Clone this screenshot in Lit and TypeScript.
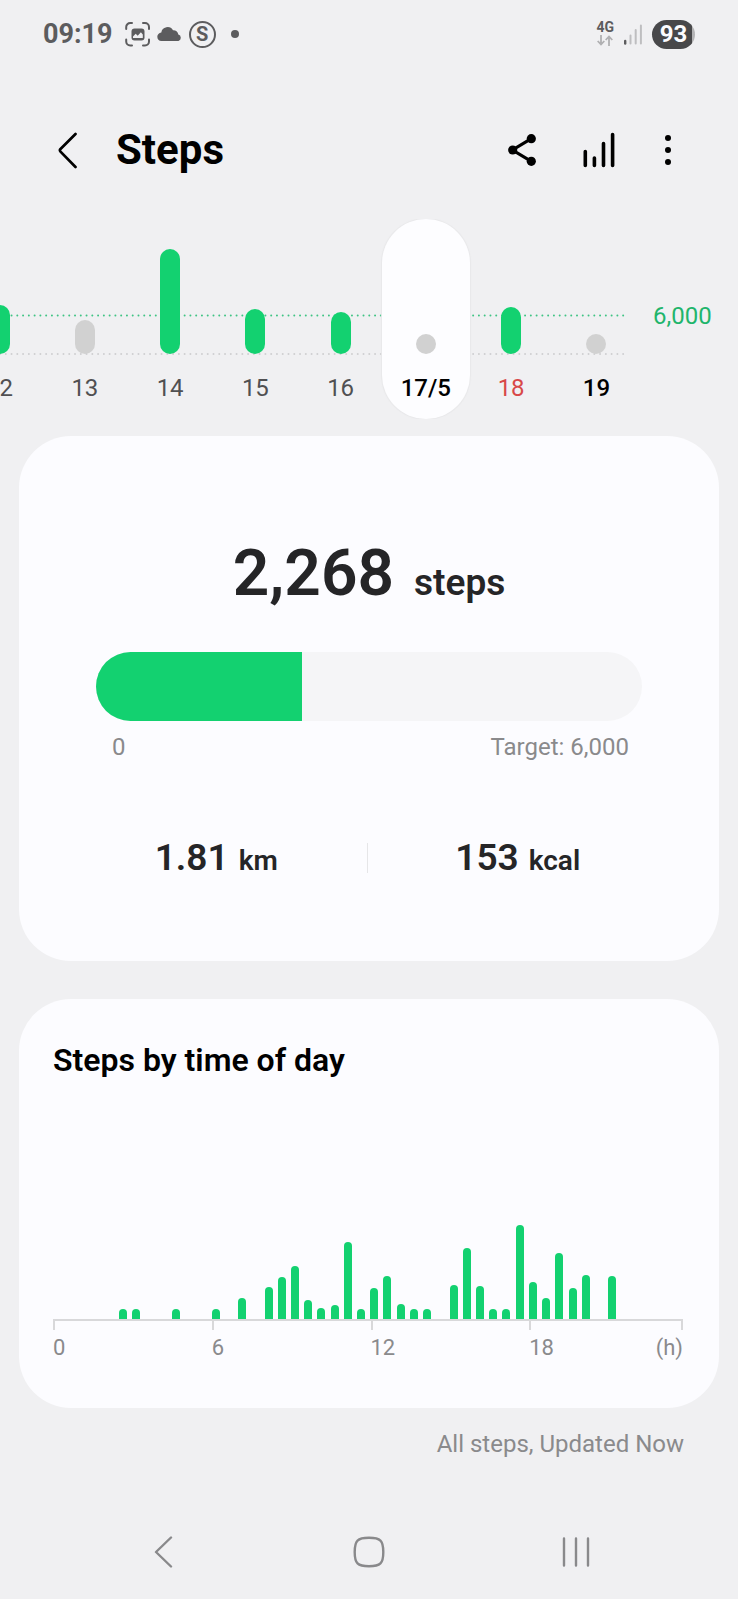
import { LitElement, html, css, svg } from "lit";
import { customElement, state } from "lit/decorators.js";
import { classMap } from "lit/directives/class-map.js";

interface Day {
  label: string;
  height: number;
  reached: boolean;
  tone?: "holiday" | "today";
}

const DAYS: Day[] = [
  { label: "12", height: 49, reached: true },
  { label: "13", height: 34, reached: false },
  { label: "14", height: 105, reached: true },
  { label: "15", height: 45, reached: true },
  { label: "16", height: 42, reached: true },
  { label: "17/5", height: 20, reached: false },
  { label: "18", height: 47, reached: true, tone: "holiday" },
  { label: "19", height: 20, reached: false, tone: "today" },
];

// One entry per half hour of the day.
const HALF_HOURS: number[] = [
  0, 0, 0, 0, 0, 10, 10, 0, 0, 10, 0, 0,
  10, 0, 21, 0, 32, 42, 53, 19, 11, 14, 77, 10,
  31, 43, 15, 10, 10, 0, 34, 71, 33, 10, 10, 94,
  37, 21, 66, 31, 44, 0, 43, 0, 0, 0, 0, 0,
];

@customElement("status-bar")
export class StatusBar extends LitElement {
  static styles = css`
    :host {
      display: flex;
      align-items: center;
      height: 68px;
      padding: 0 43px;
      color: #5c5c5e;
      font-weight: 700;
      box-sizing: border-box;
    }
    svg {
      display: block;
      flex: none;
    }
    .time {
      font-size: 27px;
      margin-right: 12px;
    }
    .notices {
      display: flex;
      align-items: center;
      gap: 7px;
    }
    .ring {
      width: 27px;
      height: 27px;
      border: 2px solid;
      border-radius: 50%;
      box-sizing: border-box;
      display: grid;
      place-items: center;
      font-size: 20px;
      line-height: 20px;
    }
    .dot {
      width: 8px;
      height: 8px;
      margin-left: 8px;
      border-radius: 50%;
      background: currentColor;
    }
    .system {
      display: flex;
      align-items: center;
      gap: 10px;
      margin-left: auto;
    }
    .network {
      display: grid;
      justify-items: center;
      gap: 2px;
      font-size: 14px;
      line-height: 11px;
    }
    .battery {
      width: 43px;
      height: 29px;
      border-radius: 15px;
      background: linear-gradient(to right, #48484a 93%, #b4b4b6 93%);
      color: #fcfcff;
      font-size: 24px;
      line-height: 29px;
      text-align: center;
    }
  `;

  render() {
    return html`
      <span class="time">09:19</span>
      <div class="notices">
        <svg width="25" height="25" viewBox="0 0 25 25" aria-hidden="true">
          <path
            d="M1.2 7V5a4 4 0 0 1 4-4H7M18 1h2a4 4 0 0 1 4 4v2M24 17.5v2a4 4 0 0 1-4 4h-2M7 23.5H5.2a4 4 0 0 1-4-4v-2"
            fill="none" stroke="currentColor" stroke-width="2" stroke-linecap="round"
          />
          <rect x="6.5" y="6.5" width="13" height="12" rx="3" fill="currentColor" />
          <path d="M8 16v-1.5l2.7-2.7 2 2 3.2-3.6 1.9 2.3V16z" fill="#f0f0f2" />
        </svg>
        <svg width="25" height="14" viewBox="0 0 25 14" aria-hidden="true">
          <path
            d="M4.5 14A4.3 4.3 0 0 1 .3 9.8c0-2.200 1.700-4 4-4.300A6.300 6.300 0 0 1 16 3.200a4.800 4.800 0 0 1 5.300 4.300A3.400 3.400 0 0 1 21.500 14z"
            fill="currentColor"
          />
        </svg>
        <span class="ring">S</span>
        <span class="dot"></span>
      </div>
      <div class="system">
        <div class="network">
          <span>4G</span>
          <svg width="16" height="11" viewBox="0 0 16 11" fill="none" stroke="#b0b0b2" stroke-width="1.8" aria-hidden="true">
            <path d="M4 0v9.500M.7 6 4 9.500 7.300 6M12 11V1.500M8.700 5 12 1.500 15.300 5" />
          </svg>
        </div>
        <svg width="18" height="21" viewBox="0 0 18 21" stroke="#bebec0" stroke-width="2" stroke-linecap="round" aria-hidden="true">
          <path d="M1.200 17v2.500" stroke="#5c5c5e" stroke-width="2.400" />
          <path d="M6.500 11.500v8M11.700 6v13.500M16.900 1.500v18" />
        </svg>
        <span class="battery">93</span>
      </div>
    `;
  }
}

@customElement("day-strip")
export class DayStrip extends LitElement {
  static styles = css`
    :host {
      display: flex;
      position: relative;
      overflow: hidden;
      height: 200px;
    }
    .guides {
      position: absolute;
      inset: 0 113px 0 0;
      width: calc(100% - 113px);
      height: 100%;
    }
    .days {
      position: relative;
      flex: 1;
      display: grid;
      grid-template-columns: repeat(8, 1fr);
      justify-items: center;
      margin-left: -43px;
    }
    .day {
      display: flex;
      flex-direction: column;
      align-items: center;
      justify-content: flex-end;
      gap: 20px;
      width: 88px;
      margin: 0 -2px;
      padding: 0 0 17px;
      border: 0;
      border-radius: 44px;
      background: none;
      color: #505052;
      font: inherit;
      font-size: 24px;
      line-height: 28px;
      cursor: pointer;
    }
    .day.holiday {
      color: #d84848;
    }
    .day.today,
    .day.selected {
      color: #000;
      font-weight: 500;
    }
    .day.selected {
      background: #fdfdff;
      box-shadow: 0 0 1px 1px #e8e8ea;
    }
    .bar {
      width: 20px;
      border-radius: 10px;
      background: #d1d1d1;
    }
    .bar.reached {
      background: #13d170;
    }
    .target {
      width: 99px;
      padding: 83px 0 0 14px;
      box-sizing: border-box;
      color: #1fb56c;
      font-size: 24px;
      line-height: 28px;
    }
  `;

  @state() private selected = 5;

  render() {
    return html`
      <svg class="guides" fill="none" stroke-width="2" stroke-linecap="round" stroke-dasharray="0 5.77" aria-hidden="true">
        ${svg`
          <line x1="0" y1="96.5" x2="100%" y2="96.5" stroke="#3fc484" />
          <line x1="0" y1="135" x2="100%" y2="135" stroke="#cfcfd1" />
        `}
      </svg>
      <div class="days">
        ${DAYS.map(
          (day, i) => html`
            <button
              class=${classMap({
                day: true,
                holiday: day.tone === "holiday",
                today: day.tone === "today",
                selected: i === this.selected,
              })}
              @click=${() => (this.selected = i)}
            >
              <span class=${classMap({ bar: true, reached: day.reached })} style="height:${day.height}px"></span>
              <span>${day.label}</span>
            </button>
          `,
        )}
      </div>
      <span class="target">6,000</span>
    `;
  }
}

@customElement("steps-summary")
export class StepsSummary extends LitElement {
  static styles = css`
    :host {
      display: block;
      padding: 98px 77px 81px;
      color: #252527;
      font-weight: 600;
    }
    .total {
      display: flex;
      justify-content: center;
      align-items: baseline;
      gap: 20px;
      font-size: 64px;
      line-height: 80px;
    }
    .total-unit {
      font-size: 37px;
      line-height: 44px;
    }
    .track {
      height: 69px;
      margin-top: 38px;
      border-radius: 35px;
      overflow: hidden;
      background: #f5f5f7;
    }
    .fill {
      height: 100%;
      background: #13d170;
    }
    .range {
      display: flex;
      justify-content: space-between;
      padding: 12px 13px 0 16px;
      color: #8a8a8c;
      font-size: 24px;
      font-weight: 400;
      line-height: 28px;
    }
    .stats {
      display: grid;
      grid-template-columns: 1fr 1px 1fr;
      align-items: center;
      margin: 75px -26px 0 -30px;
      line-height: 44px;
    }
    .stat {
      display: flex;
      justify-content: center;
      align-items: baseline;
      gap: 10px;
    }
    .value {
      font-size: 37px;
    }
    .unit {
      font-size: 28px;
      line-height: 32px;
    }
    .rule {
      height: 30px;
      background: #e6e6e8;
    }
  `;

  private steps = 2268;
  private target = 6000;

  render() {
    return html`
      <div class="total">
        <span>${this.steps.toLocaleString("en")}</span>
        <span class="total-unit">steps</span>
      </div>
      <div
        class="track"
        role="progressbar"
        aria-valuemin="0"
        aria-valuemax=${this.target}
        aria-valuenow=${this.steps}
      >
        <div class="fill" style="width:${(this.steps / this.target) * 100}%"></div>
      </div>
      <div class="range">
        <span>0</span>
        <span>Target: ${this.target.toLocaleString("en")}</span>
      </div>
      <div class="stats">
        <div class="stat"><span class="value">1.81</span><span class="unit">km</span></div>
        <div class="rule"></div>
        <div class="stat"><span class="value">153</span><span class="unit">kcal</span></div>
      </div>
    `;
  }
}

@customElement("hourly-chart")
export class HourlyChart extends LitElement {
  static styles = css`
    :host {
      display: block;
      padding: 43px 36px 46px 34px;
    }
    h2 {
      margin: 0;
      color: #000;
      font-size: 32px;
      font-weight: 600;
      line-height: 36px;
    }
    .plot {
      display: flex;
      justify-content: space-between;
      align-items: flex-end;
      height: 241px;
    }
    .bar {
      width: 8px;
      border-radius: 4px 4px 0 0;
      background: #13d170;
    }
    .scale {
      display: grid;
      grid-template-columns: 25.2% 25.2% 25.2% 1fr;
    }
    .ticks {
      height: 11px;
      border-top: 2px solid #d8d8da;
      box-sizing: border-box;
    }
    .tick {
      border-left: 2px solid #d8d8da;
    }
    .tick:last-child {
      border-right: 2px solid #d8d8da;
    }
    .labels {
      padding-top: 4px;
      color: #8a8a8c;
      font-size: 22px;
      line-height: 28px;
    }
    .last {
      display: flex;
      justify-content: space-between;
    }
  `;

  render() {
    return html`
      <h2>Steps by time of day</h2>
      <div class="plot">
        ${HALF_HOURS.map((h) => html`<span class="bar" style="height:${h}px"></span>`)}
      </div>
      <div class="scale ticks">
        <span class="tick"></span><span class="tick"></span><span class="tick"></span><span class="tick"></span>
      </div>
      <div class="scale labels">
        <span>0</span><span>6</span><span>12</span>
        <span class="last"><span>18</span><span>(h)</span></span>
      </div>
    `;
  }
}

@customElement("app-root")
export class AppRoot extends LitElement {
  static styles = css`
    :host {
      display: flex;
      flex-direction: column;
      min-height: 100vh;
      box-sizing: border-box;
      background: #f0f0f2;
      font-family: Roboto, "Liberation Sans", sans-serif;
    }
    button {
      display: grid;
      place-items: center;
      padding: 0;
      border: 0;
      background: none;
      color: inherit;
      cursor: pointer;
    }
    svg {
      display: block;
    }
    header {
      display: flex;
      align-items: center;
      height: 96px;
      margin: 34px 0 21px;
      padding: 0 54px 0 44px;
    }
    header button {
      width: 48px;
      height: 48px;
    }
    header .more {
      width: 32px;
    }
    h1 {
      flex: 1;
      margin: 0 0 0 24px;
      font-size: 42px;
      font-weight: 700;
      line-height: 48px;
    }
    .actions {
      display: flex;
      gap: 29px;
      color: #000;
    }
    .cards {
      display: grid;
      gap: 38px;
      padding: 17px 19px 0;
    }
    .card {
      border-radius: 52px;
      background: #fcfcff;
    }
    .updated {
      margin: 22px 54px 0;
      color: #8a8a8c;
      font-size: 24px;
      line-height: 28px;
      text-align: right;
    }
    nav {
      display: grid;
      grid-template-columns: repeat(3, 1fr);
      justify-items: center;
      margin-top: auto;
      padding: 0 59px 23px 60px;
      color: #89898b;
    }
    nav button {
      width: 72px;
      height: 48px;
    }
  `;

  render() {
    return html`
      <status-bar></status-bar>
      <header>
        <button aria-label="Back">
          <svg width="20" height="38" viewBox="0 0 20 38" fill="none" stroke="#000" stroke-width="2.700" stroke-linecap="round" stroke-linejoin="round">
            <path d="M17.500 3 2.500 18q-1.200 1.300 0 2.600L17.500 36" />
          </svg>
        </button>
        <h1>Steps</h1>
        <div class="actions">
          <button aria-label="Share">
            <svg width="28" height="32" viewBox="0 0 28 32" fill="currentColor">
              <path d="M23.300 4.700 4.500 16l18.800 11.300" fill="none" stroke="currentColor" stroke-width="3.200" />
              <circle cx="23.300" cy="4.700" r="4.600" />
              <circle cx="4.700" cy="16" r="4.600" />
              <circle cx="23.300" cy="27.300" r="4.600" />
            </svg>
          </button>
          <button aria-label="Statistics">
            <svg width="32" height="36" viewBox="0 0 32 36" stroke="currentColor" stroke-width="3.600" stroke-linecap="round">
              <path d="M2.300 19.500v14M11.400 26v7.500M20.500 11.500v22M29.600 2.500v31" />
            </svg>
          </button>
          <button class="more" aria-label="More options">
            <svg width="8" height="32" viewBox="0 0 8 32" fill="currentColor">
              <circle cx="4" cy="4" r="3" />
              <circle cx="4" cy="16" r="3" />
              <circle cx="4" cy="28" r="3" />
            </svg>
          </button>
        </div>
      </header>
      <day-strip></day-strip>
      <main class="cards">
        <steps-summary class="card"></steps-summary>
        <hourly-chart class="card"></hourly-chart>
      </main>
      <p class="updated">All steps, Updated Now</p>
      <nav>
        <button aria-label="Back">
          <svg width="20" height="32" viewBox="0 0 20 32" fill="none" stroke="currentColor" stroke-width="2.400" stroke-linecap="round" stroke-linejoin="round">
            <path d="M18 1.500 3 16l15 14.500" />
          </svg>
        </button>
        <button aria-label="Home">
          <svg width="32" height="32" viewBox="0 0 32 32" fill="none" stroke="currentColor" stroke-width="2.400">
            <path d="M16 1.700c11.500 0 14.300 2.800 14.300 14.300S27.500 30.300 16 30.300 1.700 27.500 1.700 16 4.500 1.700 16 1.700z" />
          </svg>
        </button>
        <button aria-label="Recent apps">
          <svg width="30" height="32" viewBox="0 0 30 32" stroke="currentColor" stroke-width="2.400" stroke-linecap="round">
            <path d="M3 2.500v27M15 2.500v27M27 2.500v27" />
          </svg>
        </button>
      </nav>
    `;
  }
}
